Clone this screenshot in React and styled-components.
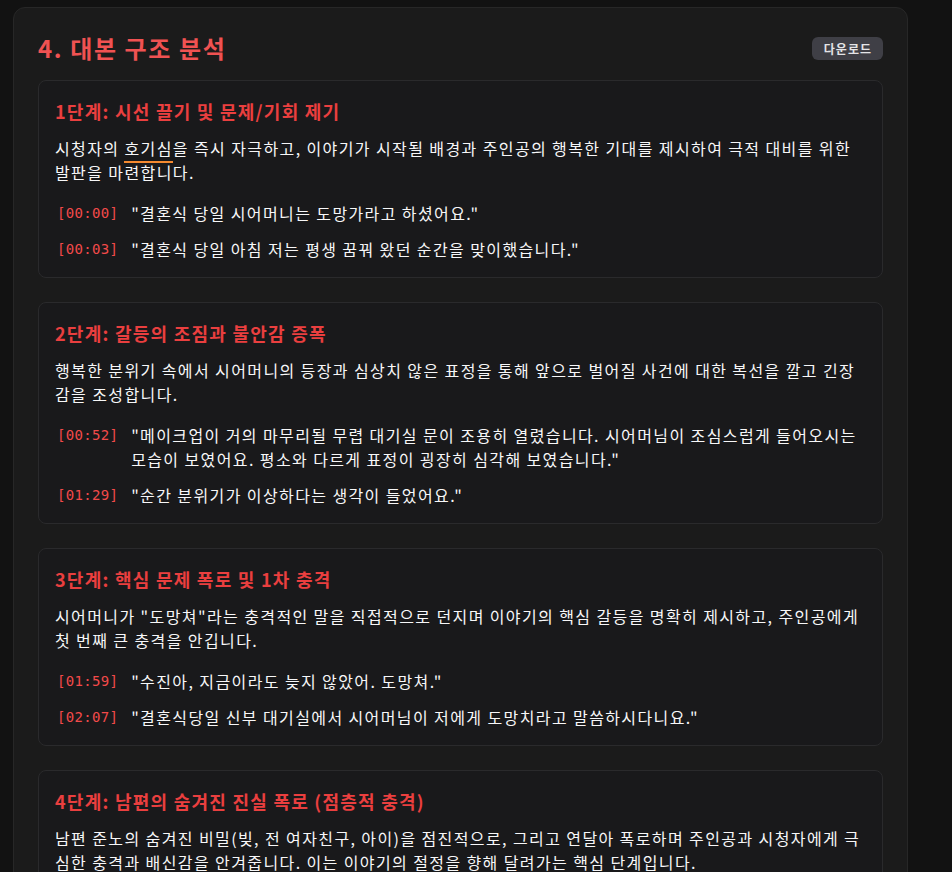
import React from "react";
import styled, { createGlobalStyle } from "styled-components";

const GlobalStyle = createGlobalStyle`
  html, body {
    margin: 0;
    padding: 0;
    background: #121212;
  }
  body {
    font-family: "Noto Sans CJK KR", "Noto Sans", sans-serif;
    color: #f4f4f5;
  }
`;

const stages = [
  {
    title: "1단계: 시선 끌기 및 문제/기회 제기",
    desc: [
      "시청자의 ",
      { term: "호기심" },
      "을 즉시 자극하고, 이야기가 시작될 배경과 주인공의 행복한 기대를 제시하여 극적 대비를 위한 발판을 마련합니다.",
    ],
    quotes: [
      ["00:00", "\"결혼식 당일 시어머니는 도망가라고 하셨어요.\""],
      ["00:03", "\"결혼식 당일 아침 저는 평생 꿈꿔 왔던 순간을 맞이했습니다.\""],
    ],
  },
  {
    title: "2단계: 갈등의 조짐과 불안감 증폭",
    desc: [
      "행복한 분위기 속에서 시어머니의 등장과 심상치 않은 표정을 통해 앞으로 벌어질 사건에 대한 복선을 깔고 긴장감을 조성합니다.",
    ],
    quotes: [
      [
        "00:52",
        "\"메이크업이 거의 마무리될 무렵 대기실 문이 조용히 열렸습니다. 시어머님이 조심스럽게 들어오시는 모습이 보였어요. 평소와 다르게 표정이 굉장히 심각해 보였습니다.\"",
      ],
      ["01:29", "\"순간 분위기가 이상하다는 생각이 들었어요.\""],
    ],
  },
  {
    title: "3단계: 핵심 문제 폭로 및 1차 충격",
    desc: [
      "시어머니가 \"도망쳐\"라는 충격적인 말을 직접적으로 던지며 이야기의 핵심 갈등을 명확히 제시하고, 주인공에게 첫 번째 큰 충격을 안깁니다.",
    ],
    quotes: [
      ["01:59", "\"수진아, 지금이라도 늦지 않았어. 도망쳐.\""],
      ["02:07", "\"결혼식당일 신부 대기실에서 시어머님이 저에게 도망치라고 말씀하시다니요.\""],
    ],
  },
  {
    title: "4단계: 남편의 숨겨진 진실 폭로 (점층적 충격)",
    desc: [
      "남편 준노의 숨겨진 비밀(빚, 전 여자친구, 아이)을 점진적으로, 그리고 연달아 폭로하며 주인공과 시청자에게 극심한 충격과 배신감을 안겨줍니다. 이는 이야기의 절정을 향해 달려가는 핵심 단계입니다.",
    ],
    quotes: [],
  },
];

const App = () => {
  return (
    <>
      <GlobalStyle />
      <Page>
        <Panel>
          <Header>
            <Title>4. 대본 구조 분석</Title>
            <DownloadButton>다운로드</DownloadButton>
          </Header>
          <StageList>
            {stages.map((s) => (
              <StageCard key={s.title}>
                <StageTitle>{s.title}</StageTitle>
                <Desc>
                  {s.desc.map((part, i) =>
                    typeof part === "string" ? (
                      <React.Fragment key={i}>{part}</React.Fragment>
                    ) : (
                      <Term key={i}>{part.term}</Term>
                    )
                  )}
                </Desc>
                {s.quotes.length > 0 && (
                  <Quotes>
                    {s.quotes.map(([time, text]) => (
                      <QuoteRow key={time}>
                        <Stamp>[{time}]</Stamp>
                        <QuoteText>{text}</QuoteText>
                      </QuoteRow>
                    ))}
                  </Quotes>
                )}
              </StageCard>
            ))}
          </StageList>
        </Panel>
      </Page>
    </>
  );
};

const Page = styled.div`
  padding: 7px 44px 0 13px;
`;

const Panel = styled.section`
  background: #1b1b1b;
  border: 1px solid #272727;
  border-radius: 12px;
  padding: 24px 24px 40px;
`;

const Header = styled.div`
  display: flex;
  align-items: center;
  justify-content: space-between;
  height: 32px;
  margin-bottom: 16px;
`;

const Title = styled.h2`
  margin: 0;
  font-size: 24px;
  line-height: 32px;
  font-weight: 700;
  letter-spacing: 1.6px;
  color: #f05252;
`;

const DownloadButton = styled.button`
  font-family: inherit;
  font-size: 12px;
  font-weight: 700;
  line-height: 15px;
  letter-spacing: 1px;
  color: #e4e4e7;
  background: #3f3f46;
  border: none;
  border-radius: 6px;
  padding: 4px 11px 4px 12px;
  cursor: pointer;
`;

const StageList = styled.div`
  display: flex;
  flex-direction: column;
  gap: 24px;
`;

const StageCard = styled.article`
  background: #19191b;
  border: 1px solid #2a2a2c;
  border-radius: 8px;
  padding: 18px 16px 16px;
`;

const StageTitle = styled.h3`
  margin: 0 0 13px;
  font-size: 18px;
  line-height: 24px;
  font-weight: 700;
  letter-spacing: 1.25px;
  color: #ea3f3f;
`;

const Desc = styled.p`
  margin: 0;
  font-size: 16px;
  line-height: 24px;
  letter-spacing: 1.4px;
  color: #f7f7f8;
`;

const Term = styled.span`
  border-bottom: 2px solid #f5892f;
  padding-bottom: 1px;
`;

const Quotes = styled.div`
  display: flex;
  flex-direction: column;
  gap: 12px;
  margin-top: 17px;
  padding-left: 2px;
`;

const QuoteRow = styled.div`
  display: flex;
  align-items: flex-start;
  gap: 13px;
`;

const Stamp = styled.span`
  flex-shrink: 0;
  font-family: "DejaVu Sans Mono", "Liberation Mono", monospace;
  font-size: 14px;
  line-height: 24px;
  letter-spacing: 0.3px;
  color: #f24a4a;
`;

const QuoteText = styled.span`
  font-size: 16px;
  line-height: 24px;
  letter-spacing: 1.4px;
  color: #f7f7f8;
`;

export default App;
